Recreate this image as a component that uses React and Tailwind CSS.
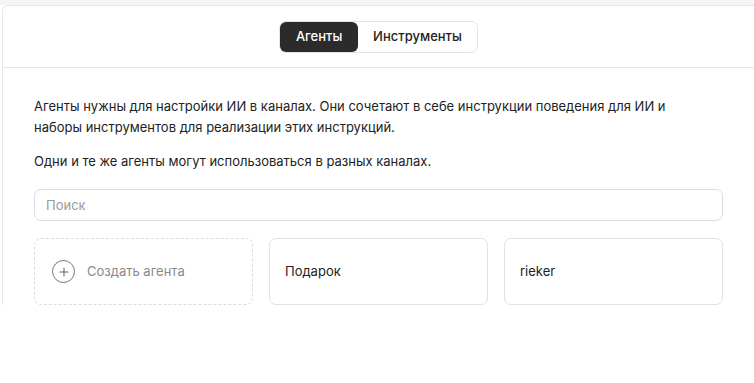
import { Plus } from 'lucide-react';

const AGENTS = ['Подарок', 'rieker'];

export default function App() {
  return (
    <div className="min-h-[383px] bg-white font-['Inter',sans-serif] text-[#222]">
      {/* верхняя серая полоса */}
      <div className="h-[5px] bg-[#f4f5f6]" />

      <div className="ml-[2px] border-l border-t border-[#e6e7e9] rounded-tl-[6px] bg-white">
        {/* Табы */}
        <div className="flex h-[62px] items-center justify-center border-b border-[#e6e7e9]">
          <div className="flex h-[32px] rounded-[7px] border border-[#e3e4e6] bg-white">
            <button className="w-[78px] rounded-[6px] bg-[#2b2b2b] text-[13px] font-medium text-white">
              Агенты
            </button>
            <button className="px-[15px] text-[13px] font-medium text-[#222]">
              Инструменты
            </button>
          </div>
        </div>

        <div className="pl-[31px] pr-[31px] pt-[28px]">
          <p className="text-[13px] leading-[21px]">
            Агенты нужны для настройки ИИ в каналах. Они сочетают в себе инструкции поведения для ИИ и
            <br />
            наборы инструментов для реализации этих инструкций.
          </p>
          <p className="mt-[13px] text-[13px] leading-[21px]">
            Одни и те же агенты могут использоваться в разных каналах.
          </p>

          <input
            placeholder="Поиск"
            className="mt-[17px] block h-[32px] w-[689px] rounded-[7px] border border-[#dcdde0] px-[11px] text-[13px] placeholder:text-[#9a9a9a] outline-none"
          />

          <div className="mt-[17px] grid w-[689px] grid-cols-3 gap-[16px]">
            <button className="flex h-[67px] items-center gap-[12px] rounded-[7px] border border-dashed border-[#dcdde0] pl-[17px] text-[13px] text-[#8a8a8a]">
              <span className="flex h-[23px] w-[23px] items-center justify-center rounded-full border-[1.5px] border-[#777]">
                <Plus size={14} strokeWidth={1.8} className="text-[#666]" />
              </span>
              Создать агента
            </button>
            {AGENTS.map((name) => (
              <div
                key={name}
                className="flex h-[67px] items-center rounded-[7px] border border-[#e0e1e3] pl-[15px] text-[13px]"
              >
                {name}
              </div>
            ))}
          </div>
        </div>
      </div>
    </div>
  );
}
